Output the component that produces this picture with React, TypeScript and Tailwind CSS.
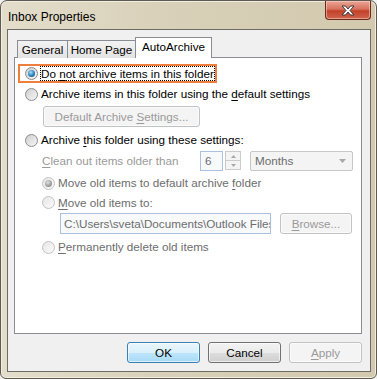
const font = "font-['Liberation_Sans',Arial,sans-serif]";

function Radio({ checked = false, disabled = false }: { checked?: boolean; disabled?: boolean }) {
  return (
    <span
      className={
        "flex items-center justify-center w-[13px] h-[13px] shrink-0 rounded-full border " +
        (disabled
          ? "border-[#c2c2c2] bg-[linear-gradient(135deg,#e6e6e6,#fafafa)]"
          : "border-[#8a8b8c] bg-[linear-gradient(135deg,#cfcfcf,#f6f6f6)]")
      }
    >
      {checked && (
        <span
          className={
            "w-[7px] h-[7px] rounded-full " +
            (disabled
              ? "bg-[radial-gradient(circle_at_40%_35%,#e0e0e0,#8f8f8f_70%)]"
              : "bg-[radial-gradient(circle_at_40%_35%,#a6e0ff,#2a7fb8_55%,#0f4f80)]")
          }
        />
      )}
    </span>
  );
}

function U({ children }: { children: string }) {
  return <span className="underline underline-offset-2">{children}</span>;
}

function Btn({
  children,
  kind = "normal",
  className = "",
}: {
  children: React.ReactNode;
  kind?: "default" | "normal" | "disabled";
  className?: string;
}) {
  const look =
    kind === "default"
      ? "border-[#3c7fb1] bg-[linear-gradient(#eaf6fd_0%,#d9f0fc_50%,#bee6fd_51%,#a7d9f5_100%)] text-black"
      : kind === "normal"
      ? "border-[#707070] bg-[linear-gradient(#f2f2f2_0%,#ebebeb_50%,#dddddd_51%,#cfcfcf_100%)] text-black"
      : "border-[#c0c3c5] bg-[#f4f4f4] text-[#9a9a9a]";
  return (
    <div
      className={
        "flex items-center justify-center h-[21px] rounded-[3px] border whitespace-nowrap shadow-[inset_0_0_0_1px_rgba(255,255,255,0.6)] " +
        look +
        " " +
        className
      }
    >
      {children}
    </div>
  );
}

export default function App() {
  return (
    <div className={"w-[377px] h-[379px] bg-[#f0f0f0] " + font + " text-[11.7px] text-black leading-none whitespace-nowrap"}>
      <div className="w-full h-full flex flex-col rounded-t-[7px] rounded-b-[6px] border border-[#5c5a52] bg-[linear-gradient(90deg,#e3ddcb_0%,#d8d0b8_45%,#d2c9ae_100%)] shadow-[inset_0_0_0_1px_#f2eedf]">
        {/* title bar */}
        <div className="h-[28px] flex justify-between">
          <span className="pl-[7px] pt-[10px] text-[12px]">Inbox Properties</span>
          <div className="mr-[5px] w-[46px] h-[19px] rounded-b-[4px] border border-t-0 border-[#6b2a1e] bg-[linear-gradient(#eaa695_0%,#d8725e_45%,#c2412a_55%,#d0644e_100%)] flex items-center justify-center shadow-[inset_0_0_0_1px_rgba(255,220,210,0.5)]">
            <svg width="14" height="11" viewBox="0 0 14 11">
              <path
                d="M1 1 H4.5 L7 4 L9.5 1 H13 L9 5.5 L13 10 H9.5 L7 7 L4.5 10 H1 L5 5.5 Z"
                fill="#ffffff"
                stroke="#3b3b3b"
                strokeWidth="1"
                strokeLinejoin="round"
              />
            </svg>
          </div>
        </div>

        {/* client area */}
        <div className="flex-1 ml-[6px] mr-[5px] mb-[6px] border border-[#6d6b66] bg-[#f0f0f0] flex flex-col pl-[6px] pr-[8px] pt-[7px] pb-[8px]">
          {/* tabs */}
          <div className="flex items-end pl-[3px] h-[21px] relative z-10 -mb-[1px]">
            <div className="h-[18px] w-[51px] pt-[1px] flex items-center justify-center border border-b-0 border-[#898c95] bg-[linear-gradient(#f2f2f2,#e3e3e3)]">
              General
            </div>
            <div className="h-[18px] w-[69px] pt-[1px] -ml-[1px] flex items-center justify-center border border-b-0 border-[#898c95] bg-[linear-gradient(#f2f2f2,#e3e3e3)]">
              Home Page
            </div>
            <div className="h-[21px] w-[77px] -ml-[1px] pb-[2px] flex items-center justify-center border border-b-0 border-[#898c95] bg-white">
              AutoArchive
            </div>
          </div>

          {/* panel */}
          <div className="h-[277px] border border-[#898c95] bg-white flex flex-col">
            <div className="mt-[6px] ml-[3px] w-[199px] h-[19px] border-2 border-[#ef7d3c] flex items-center pl-[5px]">
              <Radio checked />
              <span className="ml-[2px] px-[1px] py-[2px] outline outline-1 outline-dotted outline-black -outline-offset-1">
                Do <U>n</U>ot archive items in this folder
              </span>
            </div>
            <div className="mt-[1px] h-[20px] flex items-center pl-[10px]">
              <Radio />
              <span className="ml-[3px]">
                Archive items in this folder using the <U>d</U>efault settings
              </span>
            </div>
            <Btn kind="disabled" className="mt-[2px] ml-[28px] w-[157px]">
              <span>
                Default Archive <U>S</U>ettings...
              </span>
            </Btn>
            <div className="mt-[3px] h-[20px] flex items-center pl-[10px]">
              <Radio />
              <span className="ml-[3px]">
                Archive <U>t</U>his folder using these settings:
              </span>
            </div>
            <div className="mt-[1px] h-[20px] flex items-center pl-[27px] text-[#9a9a9a]">
              <span className="w-[158px]">
                <U>C</U>lean out items older than
              </span>
              <div className="w-[23px] h-[20px] border border-[#a9c1dc] bg-[#f7f9fb] flex items-center pl-[4px] text-[#6d6d6d]">
                6
              </div>
              <div className="ml-[2px] w-[16px] h-[20px] flex flex-col">
                <div className="h-[10px] border border-[#c9cbcd] bg-[#f4f4f4] flex items-center justify-center">
                  <svg width="5" height="3" viewBox="0 0 5 3">
                    <path d="M0 3 L2.5 0 L5 3 Z" fill="#a8a8a8" />
                  </svg>
                </div>
                <div className="h-[10px] -mt-[1px] border border-[#c9cbcd] bg-[#f4f4f4] flex items-center justify-center">
                  <svg width="5" height="3" viewBox="0 0 5 3">
                    <path d="M0 0 L2.5 3 L5 0 Z" fill="#a8a8a8" />
                  </svg>
                </div>
              </div>
              <div className="ml-[9px] w-[103px] h-[20px] rounded-[2px] border border-[#c5c7c9] bg-[#f4f4f4] flex items-center justify-between pl-[4px] pr-[6px] text-[#6d6d6d]">
                <span>Months</span>
                <svg width="7" height="4" viewBox="0 0 7 4">
                  <path d="M0 0 L3.5 4 L7 0 Z" fill="#a8a8a8" />
                </svg>
              </div>
            </div>
            <div className="mt-[2px] h-[20px] flex items-center pl-[27px] text-[#6d6d6d]">
              <Radio checked disabled />
              <span className="ml-[3px]">
                Move old items to default archive <U>f</U>older
              </span>
            </div>
            <div className="h-[19px] flex items-center pl-[27px] text-[#6d6d6d]">
              <Radio disabled />
              <span className="ml-[3px]">
                <U>M</U>ove old items to:
              </span>
            </div>
            <div className="mt-[1px] h-[21px] flex items-center pl-[45px]">
              <div className="w-[211px] h-[21px] border border-[#a9c1dc] bg-[#f7f9fb] flex items-center pl-[3px] overflow-hidden text-[#6d6d6d]">
                C:\Users\sveta\Documents\Outlook Files
              </div>
              <Btn kind="disabled" className="ml-[9px] w-[72px] text-[#8a8a8a]">
                <span>
                  <U>B</U>rowse...
                </span>
              </Btn>
            </div>
            <div className="mt-[3px] h-[20px] flex items-center pl-[27px] text-[#6d6d6d]">
              <Radio disabled />
              <span className="ml-[3px]">
                <U>P</U>ermanently delete old items
              </span>
            </div>
          </div>

          {/* buttons */}
          <div className="mt-[8px] flex justify-end gap-[8px]">
            <Btn kind="default" className="w-[73px]">OK</Btn>
            <Btn kind="normal" className="w-[73px]">Cancel</Btn>
            <Btn kind="disabled" className="w-[73px]">
              <span>
                <U>A</U>pply
              </span>
            </Btn>
          </div>
        </div>
      </div>
    </div>
  );
}
